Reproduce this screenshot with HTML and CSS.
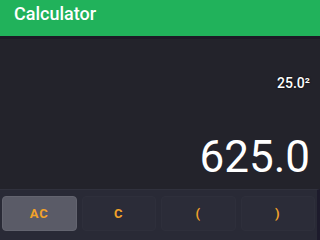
FILE: index.html
```html
<!DOCTYPE html>
<html lang="en">
  <head>
    <meta charset="UTF-8" />
    <title>Calculator</title>
    <link rel="stylesheet" href="styles.css">
  </head>
  <body>
    <header class="app-bar">Calculator</header>
    <div class="display">
      <div class="expression">25.0²</div>
      <div class="result">625.0</div>
    </div>
    <div class="keypad">
      <button class="key key-active">AC</button>
      <button class="key">C</button>
      <button class="key">(</button>
      <button class="key">)</button>
    </div>
  </body>
</html>
```

FILE: styles.css
```css
:root {
  --green: #21b25b;
  --display-bg: #23232b;
  --pad-bg: #292a36;
  --key-bg: #2b2c38;
  --accent: #f2a22a;
}
* {
  box-sizing: border-box;
  margin: 0;
  padding: 0;
}
body {
  font-family: Roboto, "Noto Sans", sans-serif;
  width: 320px;
  height: 240px;
  overflow: hidden;
  background: var(--display-bg);
  display: flex;
  flex-direction: column;
}
.app-bar {
  height: 39px;
  background: var(--green);
  color: #fff;
  font-size: 18px;
  font-weight: 500;
  line-height: 28px;
  padding-left: 14px;
  border-bottom: 3px solid #1c1a26;
}
.display {
  height: 150px;
  display: flex;
  flex-direction: column;
  align-items: flex-end;
  padding: 36px 10px 0 0;
  color: #fff;
}
.expression {
  font-size: 14px;
  font-weight: 500;
  line-height: 16px;
  text-shadow: 0 0 2px #000;
}
.result {
  font-size: 44px;
  line-height: 48px;
  margin-top: 42px;
}
.keypad {
  flex: 1;
  background: var(--pad-bg);
  border-top: 1px solid #30313d;
  border-right: 3px solid #1d1b2c;
  display: grid;
  grid-template-columns: repeat(4, 1fr);
  gap: 5px;
  padding: 6px 2px 0 2px;
  align-items: start;
}
.key {
  height: 35px;
  border: 1px solid #2e2f3b;
  border-radius: 4px;
  background: var(--key-bg);
  color: var(--accent);
  font-family: Roboto, "Noto Sans", sans-serif;
  font-size: 13px;
  font-weight: 700;
  letter-spacing: 1px;
}
.key-active {
  background: #5a5b67;
  border-color: #63646f;
}
```
